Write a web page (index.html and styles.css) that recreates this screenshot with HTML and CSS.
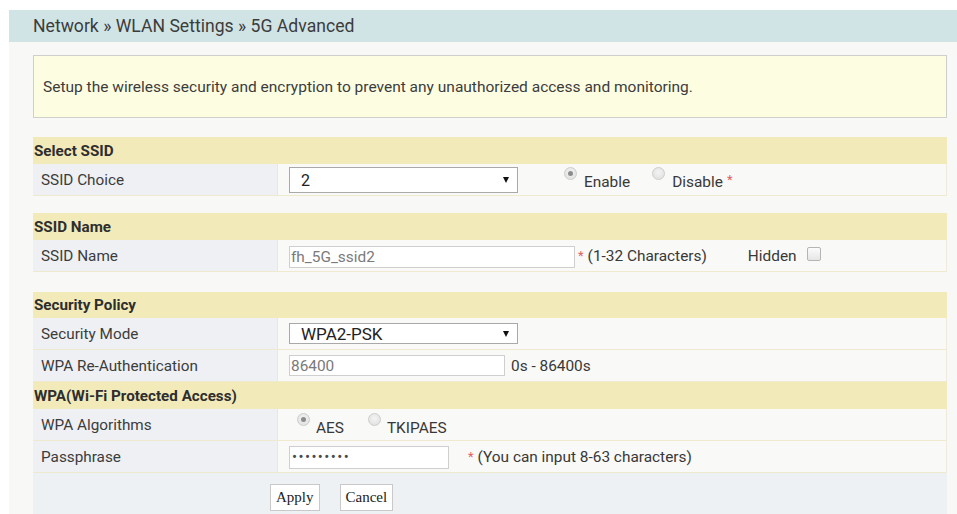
FILE: index.html
```html
<!DOCTYPE html>
<html lang="en">
<head>
<meta charset="utf-8">
<title>5G Advanced</title>
<link rel="stylesheet" href="styles.css">
</head>
<body>
<div class="page">
  <div class="crumb">Network &raquo; WLAN Settings &raquo; 5G Advanced</div>
  <div class="content">
    <div class="notice">Setup the wireless security and encryption to prevent any unauthorized access and monitoring.</div>

    <section class="group">
      <div class="head">Select SSID</div>
      <div class="row">
        <div class="label">SSID Choice</div>
        <div class="value">
          <div class="select select-ssid"><span>2</span><i class="arrow"></i></div>
          <span class="radio checked r-enable"></span><span class="opt">Enable</span>
          <span class="radio r-disable"></span><span class="opt">Disable</span><span class="star">*</span>
        </div>
      </div>
    </section>

    <section class="group g-name">
      <div class="head">SSID Name</div>
      <div class="row">
        <div class="label">SSID Name</div>
        <div class="value">
          <div class="field f-name">fh_5G_ssid2</div>
          <span class="star s-name">*</span><span class="note">(1-32 Characters)</span>
          <span class="note hidden-lbl">Hidden</span><span class="check"></span>
        </div>
      </div>
    </section>

    <section class="group g-sec">
      <div class="head head-short">Security Policy</div>
      <div class="row">
        <div class="label">Security Mode</div>
        <div class="value">
          <div class="select select-mode"><span>WPA2-PSK</span><i class="arrow"></i></div>
        </div>
      </div>
      <div class="row">
        <div class="label">WPA Re-Authentication</div>
        <div class="value">
          <div class="field f-reauth">86400</div>
          <span class="note n-range">0s - 86400s</span>
        </div>
      </div>
      <div class="head">WPA(Wi-Fi Protected Access)</div>
      <div class="row">
        <div class="label">WPA Algorithms</div>
        <div class="value">
          <span class="radio checked r-aes"></span><span class="opt o-low">AES</span>
          <span class="radio r-tkip"></span><span class="opt o-low">TKIPAES</span>
        </div>
      </div>
      <div class="row">
        <div class="label">Passphrase</div>
        <div class="value">
          <div class="field f-pass"><span class="dots">&bull;&bull;&bull;&bull;&bull;&bull;&bull;&bull;&bull;</span></div>
          <span class="star s-pass">*</span><span class="note">(You can input 8-63 characters)</span>
        </div>
      </div>
      <div class="actions">
        <button class="btn" type="button">Apply</button>
        <button class="btn" type="button">Cancel</button>
      </div>
    </section>
  </div>
</div>
</body>
</html>
```
FILE: styles.css
```css
* { box-sizing: border-box; }

html, body {
  margin: 0;
  padding: 0;
  background: #ffffff;
}

body {
  font-family: Roboto, "Liberation Sans", Arial, sans-serif;
  color: #383838;
  padding-top: 10px;
  height: 514px;
  overflow: hidden;
}

.page {
  margin-left: 9px;
  background: #f8f8f6;
  min-height: 504px;
}

/* breadcrumb bar */
.crumb {
  height: 32px;
  line-height: 32px;
  padding-left: 24px;
  background: #d0e4e6;
  font-size: 17.6px;
  color: #3c3c3c;
}

.content {
  padding: 13px 10px 0 24px;
}

/* yellow info box */
.notice {
  height: 63px;
  border: 1px solid #cfcfcc;
  background: #fdfde2;
  font-size: 15.5px;
  color: #3c3c3c;
  padding-left: 9px;
  display: flex;
  align-items: center;
}

.group { margin-top: 19px; }
.g-name { margin-top: 17px; }
.g-sec { margin-top: 20px; }

.head {
  height: 27px;
  background: #f2eab9;
  font-weight: 700;
  font-size: 15.2px;
  color: #2e2e2e;
  padding-left: 1px;
  display: flex;
  align-items: center;
}
.head-short { height: 26px; }

.row {
  display: grid;
  grid-template-columns: 245px 1fr;
  height: 32px;
  border-bottom: 1px solid #efe9cf;
  border-right: 1px solid #efeadb;
}

.label {
  background: #eef0f4;
  border-right: 1px solid #eee8cf;
  font-size: 15.3px;
  color: #3c3c3c;
  padding-left: 8px;
  display: flex;
  align-items: center;
}

.value {
  background: #f9f9f7;
  padding-left: 11px;
  display: flex;
  align-items: center;
  font-size: 15.4px;
  color: #383838;
}

/* dropdowns */
.select {
  display: flex;
  align-items: center;
  justify-content: space-between;
  background: #ffffff;
  border: 1px solid #a9a9a9;
  padding: 0 8px 0 11px;
  font-size: 16px;
  color: #222222;
}
.select-ssid { width: 229px; height: 26px; margin-top: 1px; }
.select-mode { width: 229px; height: 21px; font-size: 17px; }

.arrow {
  width: 0;
  height: 0;
  border-left: 3.5px solid transparent;
  border-right: 3.5px solid transparent;
  border-top: 6px solid #111111;
}

/* text boxes */
.field {
  background: #ffffff;
  border: 1px solid #cfcfcf;
  padding-left: 1px;
  color: #7a7a7a;
  font-size: 15.4px;
  display: flex;
  align-items: center;
}
.f-name { width: 286px; height: 22px; margin-top: 2px; }
.f-reauth { width: 216px; height: 21px; }
.f-pass { width: 160px; height: 23px; margin-top: 1px; }

.dots {
  color: #4a4a4a;
  font-size: 15px;
  letter-spacing: 1.4px;
  padding-left: 1px;
}

/* radio buttons */
.radio {
  width: 13px;
  height: 13px;
  border-radius: 50%;
  border: 1px solid #cdcdcd;
  background: radial-gradient(circle at 50% 40%, #f3f3f3 0%, #dedede 100%);
  display: inline-flex;
  align-items: center;
  justify-content: center;
  align-self: flex-start;
  margin-top: 3px;
  flex: none;
}
.radio.checked::after {
  content: "";
  width: 5px;
  height: 5px;
  border-radius: 50%;
  background: #8c8c8c;
}
.r-enable { margin-left: 46px; }
.r-disable { margin-left: 22px; }
.r-aes { margin-left: 8px; margin-top: 4px; }
.r-tkip { margin-left: 24px; margin-top: 4px; }

.opt {
  margin-left: 7px;
  padding-top: 4px;
}
.o-low { margin-left: 6px; padding-top: 7px; }

.star {
  color: #e06262;
  font-size: 13px;
  margin-left: 4px;
}
.s-name { margin-left: 3px; }
.s-pass { margin-left: 19px; }

.note { margin-left: 4px; }
.hidden-lbl { margin-left: 41px; }
.n-range { margin-left: 6px; }

.check {
  width: 14px;
  height: 14px;
  border: 1px solid #b5b5b5;
  border-radius: 2px;
  background: linear-gradient(#fbfbfb, #e6e6e6);
  margin-left: 10px;
  margin-bottom: 4px;
}

/* apply / cancel */
.actions {
  background: #eef1f4;
  height: 60px;
  padding: 11px 0 0 237px;
  display: flex;
  align-items: flex-start;
  gap: 20px;
}

.btn {
  font-family: "Liberation Serif", "Times New Roman", serif;
  font-size: 15px;
  color: #222222;
  background: #ffffff;
  border: 1px solid #c9c9c9;
  height: 27px;
  padding: 0 5px;
  margin: 0;
  border-radius: 0;
}
```
